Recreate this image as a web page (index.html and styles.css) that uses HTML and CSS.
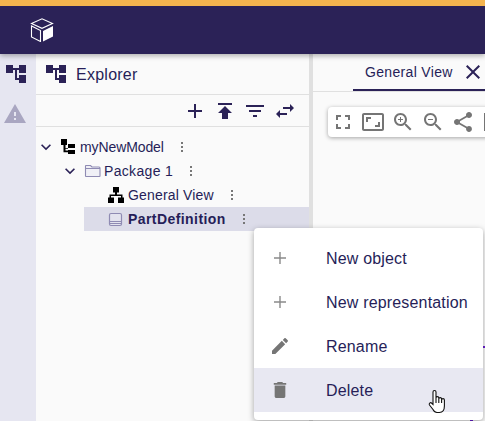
FILE: index.html
```html
<!DOCTYPE html>
<html lang="en">
<head>
<meta charset="utf-8">
<title>Explorer</title>
<link rel="stylesheet" href="styles.css">
</head>
<body>
<header class="topbar">
  <svg class="logo" viewBox="0 0 24 24" width="24" height="24">
    <path class="logo-line" d="M1.5 5.5 12 .8l10.5 4.700L12 10.300z"/>
    <path class="logo-line" d="M1.500 8v11l9 4.500V12.500z"/>
    <path class="logo-fill" d="M13 13v10.500l10-5V8z"/>
  </svg>
</header>
<main class="workspace">
  <nav class="rail">
    <svg class="ico" viewBox="0 0 24 24"><path class="navy" d="M22 11V3h-7v3H9V3H2v8h7V8h2v10h4v3h7v-8h-7v3h-2V8h2v3z"/></svg>
    <svg class="ico warn" viewBox="0 0 24 24"><path d="M1 21h22L12 2 1 21zm12-3h-2v-2h2v2zm0-4h-2v-4h2v4z"/></svg>
  </nav>
  <section class="explorer">
    <div class="panel-head">
      <svg class="ico" viewBox="0 0 24 24"><path class="navy" d="M22 11V3h-7v3H9V3H2v8h7V8h2v10h4v3h7v-8h-7v3h-2V8h2v3z"/></svg>
      <span class="panel-title">Explorer</span>
    </div>
    <div class="panel-tools">
      <svg class="ico" viewBox="0 0 24 24"><path class="navy" d="M19 13h-6v6h-2v-6H5v-2h6V5h2v6h6v2z"/></svg>
      <svg class="ico" viewBox="0 0 24 24"><path class="navy" d="M5 4v2h14V4H5zm0 10h4v6h6v-6h4l-7-7-7 7z"/></svg>
      <svg class="ico" viewBox="0 0 24 24"><path class="navy" d="M10 18h4v-2h-4v2zM3 6v2h18V6H3zm3 7h12v-2H6v2z"/></svg>
      <svg class="ico" viewBox="0 0 24 24"><path class="navy" d="M6.990 11L3 15l3.990 4v-3H14v-2H6.990v-3zM21 9l-3.990-4v3H10v2h7.010v3L21 9z"/></svg>
    </div>
    <ul class="tree">
      <li class="row lvl0">
        <svg class="chev" viewBox="0 0 24 24"><path class="navy" d="M16.590 8.590L12 13.170 7.410 8.590 6 10l6 6 6-6z"/></svg>
        <svg class="node" viewBox="0 0 24 24"><path d="M5 4h6v6H9.500v3H12V9h7v4h-7v.8H9.500V15.500H12V15h7v4h-7v-1.800H7.500V10H5z"/></svg>
        <span class="label-tight">myNewModel</span><i class="kebab"></i>
      </li>
      <li class="row lvl1">
        <svg class="chev" viewBox="0 0 24 24"><path class="navy" d="M16.590 8.590L12 13.170 7.410 8.590 6 10l6 6 6-6z"/></svg>
        <svg class="node" viewBox="0 0 24 24"><path class="folder" d="M5.500 8V7c0-.5.300-.5.500-.5h4.500l1.500 1.500h7c.6 0 1 .4 1 1v8c0 .3-.2.500-.5.500H6c-.3 0-.5-.2-.5-.5zM5.500 9.500H20"/></svg>
        <span class="label-wide">Package 1</span><i class="kebab"></i>
      </li>
      <li class="row lvl2">
        <span class="chev"></span>
        <svg class="node" viewBox="0 0 24 24"><path d="M9 4h6v5.500h-2V11.500h5.500V14.500H20V20h-6v-5.500h3V13H7v1.500h3V20H4v-5.500h1.500v-3H11V9.500H9z"/></svg>
        <span class="label-mid">General View</span><i class="kebab"></i>
      </li>
      <li class="row lvl2 selected">
        <span class="chev"></span>
        <svg class="node" viewBox="0 0 24 24"><path class="book" d="M5.500 8c0-1.100.9-1.500 1.500-1.500h9c1.100 0 1.500.9 1.500 1.500v9c0 1.100-.9 1.500-1.500 1.500H7c-1.100 0-1.500-.9-1.500-1.500zM5.500 14.500h12M5.500 16.500h12"/></svg>
        <span class="label-bold">PartDefinition</span><i class="kebab"></i>
      </li>
    </ul>
  </section>
  <section class="editor">
    <div class="tabs">
      <div class="tab">
        <span class="tab-label">General View</span>
        <svg class="ico" viewBox="0 0 24 24"><path class="navy" d="M19 6.410L17.590 5 12 10.590 6.410 5 5 6.410 10.590 12 5 17.590 6.410 19 12 13.410 17.590 19 19 17.590 13.410 12z"/></svg>
      </div>
    </div>
    <div class="diagram-tools">
      <svg class="ico" viewBox="0 0 24 24"><path d="M7 14H5v5h5v-2H7v-3zm-2-4h2V7h3V5H5v5zm12 7h-3v2h5v-5h-2v3zM14 5v2h3v3h2V5h-5z"/></svg>
      <svg class="ico" viewBox="0 0 24 24"><path d="M19 12h-2v3h-3v2h5v-5zM7 9h3V7H5v5h2V9zm14-6H3c-1.100 0-2 .9-2 2v14c0 1.100.9 2 2 2h18c1.100 0 2-.9 2-2V5c0-1.100-.9-2-2-2zm0 16.010H3V4.990h18v14.020z"/></svg>
      <svg class="ico" viewBox="0 0 24 24"><path d="M15.500 14h-.79l-.28-.27C15.410 12.590 16 11.110 16 9.500 16 5.910 13.090 3 9.500 3S3 5.910 3 9.500 5.910 16 9.500 16c1.610 0 3.090-.59 4.230-1.570l.27.28v.79l5 4.990L20.490 19l-4.990-5zm-6 0C7.010 14 5 11.990 5 9.500S7.010 5 9.500 5 14 7.010 14 9.500 11.990 14 9.500 14z"/><path d="M12 10h-2v2H9v-2H7V9h2V7h1v2h2v1z"/></svg>
      <svg class="ico" viewBox="0 0 24 24"><path d="M15.500 14h-.79l-.28-.27C15.410 12.590 16 11.110 16 9.500 16 5.910 13.090 3 9.500 3S3 5.910 3 9.500 5.910 16 9.500 16c1.610 0 3.090-.59 4.230-1.570l.27.28v.79l5 4.990L20.490 19l-4.990-5zm-6 0C7.010 14 5 11.990 5 9.500S7.010 5 9.500 5 14 7.010 14 9.500 11.990 14 9.500 14z"/><path d="M7 9h5v1H7z"/></svg>
      <svg class="ico" viewBox="0 0 24 24"><path d="M18 16.080c-.76 0-1.440.3-1.960.77L8.910 12.700c.05-.23.09-.46.09-.7s-.04-.47-.09-.7l7.050-4.110c.54.5 1.250.81 2.040.81 1.660 0 3-1.340 3-3s-1.340-3-3-3-3 1.340-3 3c0 .24.04.47.09.7L8.040 9.810C7.500 9.310 6.790 9 6 9c-1.660 0-3 1.340-3 3s1.340 3 3 3c.79 0 1.500-.31 2.040-.81l7.120 4.160c-.05.21-.08.43-.08.65 0 1.610 1.310 2.920 2.920 2.920 1.610 0 2.920-1.310 2.920-2.920s-1.310-2.920-2.920-2.920z"/></svg>
      <svg class="ico" viewBox="0 0 24 24"><path d="M3 3h18v18H3zM5 5v14h14V5z"/></svg>
    </div>
  </section>
</main>
<span class="edge-mark edge-a"></span>
<span class="edge-mark edge-b"></span>
<ul class="menu">
  <li class="menu-item">
    <svg class="ico" viewBox="0 0 24 24"><path class="thin-plus" d="M18 12.700h-5.300V18h-1.400v-5.300H6v-1.400h5.300V6h1.400v5.300H18z"/></svg>
    <span>New object</span>
  </li>
  <li class="menu-item">
    <svg class="ico" viewBox="0 0 24 24"><path class="thin-plus" d="M18 12.700h-5.300V18h-1.400v-5.300H6v-1.400h5.300V6h1.400v5.300H18z"/></svg>
    <span>New representation</span>
  </li>
  <li class="menu-item">
    <svg class="ico" viewBox="-1.500 -1.500 27 27"><path d="M3 17.250V21h3.750L17.810 9.940l-3.750-3.750L3 17.250zM20.710 7.040c.39-.39.39-1.020 0-1.410l-2.340-2.340c-.39-.39-1.020-.39-1.410 0l-1.830 1.830 3.750 3.750 1.830-1.830z"/></svg>
    <span>Rename</span>
  </li>
  <li class="menu-item hover">
    <svg class="ico" viewBox="-1.500 -1.500 27 27"><path d="M6 19c0 1.100.9 2 2 2h8c1.100 0 2-.9 2-2V7H6v12zM19 4h-3.500l-1-1h-5l-1 1H5v2h14V4z"/></svg>
    <span>Delete</span>
  </li>
</ul>
<svg class="hand" viewBox="0 0 18 25" width="18" height="25">
  <path class="hand-body" d="M5 14V3a1.500 1.500 0 0 1 3 0v6a1.400 1.400 0 0 1 2.800 0v1a1.400 1.400 0 0 1 2.800 0v1a1.400 1.400 0 0 1 2.800 0v6c0 4-2 6.500-5 6.500H9c-2 0-3-1-4-3l-3.500-4.500c-1-1.500 1-3 2-2L5 15.500z"/>
  <path class="hand-body" d="M8 9v5M10.800 10v4M13.600 11v3"/>
</svg>
</body>
</html>
```
FILE: styles.css
```css
* { box-sizing: border-box; }

html, body {
  margin: 0;
  height: 100%;
}

body {
  position: relative;
  display: flex;
  flex-direction: column;
  overflow: hidden;
  background: #fafafa;
  color: #261e58;
  font-family: "Liberation Sans", Arial, sans-serif;
  font-size: 14px;
}

.ico {
  display: block;
  flex: none;
  width: 24px;
  height: 24px;
}

.navy { fill: #2b2257; }

.topbar {
  position: relative;
  z-index: 2;
  flex: none;
  display: flex;
  align-items: center;
  height: 54px;
  padding-left: 30px;
  background: #2b2257;
  border-top: 6px solid #f4b44e;
  box-shadow: 0 2px 5px rgba(0, 0, 0, .3);
}

.logo-line { fill: none; stroke: #fff; stroke-width: 1.100; }
.logo-fill { fill: #fff; }

.workspace {
  flex: 1;
  display: flex;
  min-height: 0;
}

.rail {
  flex: none;
  width: 36px;
  display: flex;
  flex-direction: column;
  gap: 16px;
  padding: 8px 0 0 4px;
  background: #e6e6f1;
}

.warn { margin-left: -1px; fill: #a9a6c1; }

.explorer {
  flex: none;
  width: 277px;
  border-right: 4px solid #e0e0e0;
}

.panel-head {
  display: flex;
  align-items: center;
  gap: 8px;
  height: 41px;
  padding-left: 8px;
  border-bottom: 1px solid #e0e0e0;
}

.panel-title {
  padding-top: 2px;
  font-size: 16px;
  letter-spacing: .25px;
}

.panel-tools {
  display: flex;
  justify-content: flex-end;
  align-items: center;
  gap: 6px;
  height: 32px;
  padding-right: 12px;
  border-bottom: 1px solid #e0e0e0;
}

.tree {
  list-style: none;
  margin: 0;
  padding: 8px 0 0;
}

.row {
  display: flex;
  align-items: center;
  height: 24px;
}

.lvl0 { margin-left: 0; }
.lvl1 { margin-left: 24px; }
.lvl2 { margin-left: 48px; }

.label-tight { letter-spacing: -.1px; }
.label-wide { letter-spacing: .33px; }
.label-mid { letter-spacing: .17px; }
.label-bold { letter-spacing: .43px; }

.selected {
  background: #dcdce9;
  font-weight: 700;
}

.chev {
  flex: none;
  width: 20px;
  height: 20px;
}

.node {
  flex: none;
  width: 24px;
  height: 24px;
  fill: #000;
}

.node .folder {
  fill: #f0f0f6;
  stroke: #8f8bb3;
  stroke-width: 1.100;
}

.node .book {
  fill: #e3e3ee;
  stroke: #8f8bb3;
  stroke-width: 1.200;
}

.kebab {
  flex: none;
  width: 2px;
  height: 2px;
  margin-left: 17px;
  background: #777;
  box-shadow: 0 -4px 0 #777, 0 4px 0 #777;
}

.editor {
  flex: 1;
  min-width: 0;
  overflow: hidden;
}

.tabs {
  height: 38px;
  padding-left: 40px;
  border-bottom: 1px solid #e0e0e0;
}

.tab {
  display: flex;
  align-items: center;
  height: 37px;
  padding-left: 12px;
  border-bottom: 2.500px solid #2b2257;
}

.tab-label {
  width: 96px;
  letter-spacing: .33px;
}

.diagram-tools {
  display: flex;
  gap: 6px;
  align-items: center;
  width: 200px;
  height: 30px;
  margin: 15px 0 0 15px;
  padding-left: 3px;
  background: #fff;
  border-radius: 4px;
  box-shadow: 0 1px 4px rgba(0, 0, 0, .35);
  fill: #757575;
}

.edge-mark {
  position: absolute;
  background: #6a1fd0;
}

.edge-a {
  left: 483px;
  top: 346px;
  width: 2px;
  height: 2px;
}

.edge-b {
  left: 470px;
  top: 420px;
  width: 3px;
  height: 1px;
}

.menu {
  position: absolute;
  z-index: 3;
  left: 254px;
  top: 228px;
  width: 229px;
  margin: 0;
  padding: 8px 0;
  list-style: none;
  background: #fff;
  border-radius: 4px;
  box-shadow: 0 2px 6px rgba(0, 0, 0, .35);
  font-size: 16px;
  letter-spacing: .17px;
}

.menu-item {
  display: flex;
  align-items: center;
  gap: 34px;
  height: 44px;
  padding-left: 14px;
  fill: #757575;
}

.menu-item span { padding-top: 2px; }

.thin-plus { fill: #8a8a8a; }

.hover { background: #e8e8f2; }

.hand {
  position: absolute;
  z-index: 4;
  left: 428px;
  top: 389px;
}

.hand-body {
  fill: #fff;
  stroke: #111;
  stroke-width: 1.100;
}
```
